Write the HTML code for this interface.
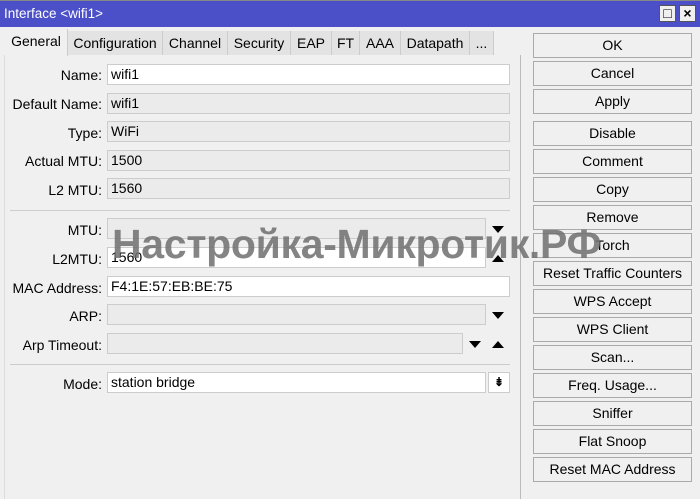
<!DOCTYPE html>
<html><head><style>
body{margin:0;width:700px;height:499px;background:#f0f0f0;font-family:"Liberation Sans",sans-serif;font-size:14px;color:#000;position:relative;overflow:hidden}
.abs{position:absolute}
.title{left:0;top:0;width:700px;height:26px;background:#4b4fc8;border-top:1px solid #888}
.title span{position:absolute;left:4px;top:5px;color:#fff;font-size:13.5px}
.wb{top:5px;width:17px;height:17px;background:#f0f0f0;border:1px solid #555;box-sizing:border-box;text-align:center;font-size:14px;line-height:15px}
.tab{top:31px;height:24px;background:#e3e3e3;border-right:1px solid #ccc;line-height:24px;text-align:center;box-sizing:border-box;white-space:nowrap}
.panel{left:4px;top:55px;width:515px;height:444px;background:#f0f0f0;border-left:1px solid #ddd;border-right:1px solid #bbb}
.lbl{width:102px;text-align:right;left:0}
.in{left:107px;height:21px;border:1px solid #ccc;box-sizing:border-box;background:#ebebeb;padding-left:3px;line-height:19px}
.w{background:#fff}
.sep{left:10px;width:500px;height:1px;background:#ccc}
.btn{left:533px;width:159px;height:25px;border:1px solid #aaa;box-sizing:border-box;background:#f0f0f0;text-align:center;line-height:23px;white-space:nowrap}
.dn,.up{width:0;height:0;border-left:6px solid transparent;border-right:6px solid transparent}
.dn{border-top:7px solid #000}.up{border-bottom:7px solid #000}
</style></head><body>
<div class="abs title"><span>Interface &lt;wifi1&gt;</span></div>
<div class="abs wb" style="left:659px">□</div>
<div class="abs wb" style="left:679px;font-weight:bold">×</div>
<div class="abs panel"></div>
<div class="abs tab" style="left:5px;width:63px;background:#f0f0f0;top:29px;height:27px">General</div>
<div class="abs tab" style="left:68px;width:95px">Configuration</div>
<div class="abs tab" style="left:163px;width:65px">Channel</div>
<div class="abs tab" style="left:228px;width:63px">Security</div>
<div class="abs tab" style="left:291px;width:41px">EAP</div>
<div class="abs tab" style="left:332px;width:28px">FT</div>
<div class="abs tab" style="left:360px;width:41px">AAA</div>
<div class="abs tab" style="left:401px;width:69px">Datapath</div>
<div class="abs tab" style="left:470px;width:24px">...</div>

<div class="abs lbl" style="top:67px">Name:</div><div class="abs in w" style="top:64px;width:403px">wifi1</div>
<div class="abs lbl" style="top:96px">Default Name:</div><div class="abs in" style="top:93px;width:403px">wifi1</div>
<div class="abs lbl" style="top:125px">Type:</div><div class="abs in" style="top:121px;width:403px">WiFi</div>
<div class="abs lbl" style="top:153px">Actual MTU:</div><div class="abs in" style="top:150px;width:403px">1500</div>
<div class="abs lbl" style="top:182px">L2 MTU:</div><div class="abs in" style="top:178px;width:403px">1560</div>
<div class="abs sep" style="top:210px"></div>
<div class="abs lbl" style="top:222px">MTU:</div><div class="abs in" style="top:218px;width:379px"></div><div class="abs dn" style="left:492px;top:226px"></div>
<div class="abs lbl" style="top:251px">L2MTU:</div><div class="abs in w" style="top:247px;width:379px">1560</div><div class="abs up" style="left:492px;top:255px"></div>
<div class="abs lbl" style="top:280px">MAC Address:</div><div class="abs in w" style="top:276px;width:403px">F4:1E:57:EB:BE:75</div>
<div class="abs lbl" style="top:308px">ARP:</div><div class="abs in" style="top:304px;width:379px"></div><div class="abs dn" style="left:492px;top:312px"></div>
<div class="abs lbl" style="top:337px">Arp Timeout:</div><div class="abs in" style="top:333px;width:356px"></div><div class="abs dn" style="left:469px;top:341px"></div><div class="abs up" style="left:492px;top:341px"></div>
<div class="abs sep" style="top:364px"></div>
<div class="abs lbl" style="top:376px">Mode:</div><div class="abs in w" style="top:372px;width:379px">station bridge</div>
<div class="abs in w" style="left:488px;top:372px;width:22px;text-align:center;padding:0;font-weight:bold;font-size:12px">⇟</div>

<div class="abs btn" style="top:33px">OK</div>
<div class="abs btn" style="top:61px">Cancel</div>
<div class="abs btn" style="top:89px">Apply</div>
<div class="abs btn" style="top:121px">Disable</div>
<div class="abs btn" style="top:149px">Comment</div>
<div class="abs btn" style="top:177px">Copy</div>
<div class="abs btn" style="top:205px">Remove</div>
<div class="abs btn" style="top:233px">Torch</div>
<div class="abs btn" style="top:261px">Reset Traffic Counters</div>
<div class="abs btn" style="top:289px">WPS Accept</div>
<div class="abs btn" style="top:317px">WPS Client</div>
<div class="abs btn" style="top:345px">Scan...</div>
<div class="abs btn" style="top:373px">Freq. Usage...</div>
<div class="abs btn" style="top:401px">Sniffer</div>
<div class="abs btn" style="top:429px">Flat Snoop</div>
<div class="abs btn" style="top:457px">Reset MAC Address</div>

<div class="abs" style="left:112px;top:221px;font-size:41px;font-weight:bold;color:rgba(110,110,110,0.85);white-space:nowrap;letter-spacing:-0.3px">Настройка-Микротик.РФ</div>
</body></html>
